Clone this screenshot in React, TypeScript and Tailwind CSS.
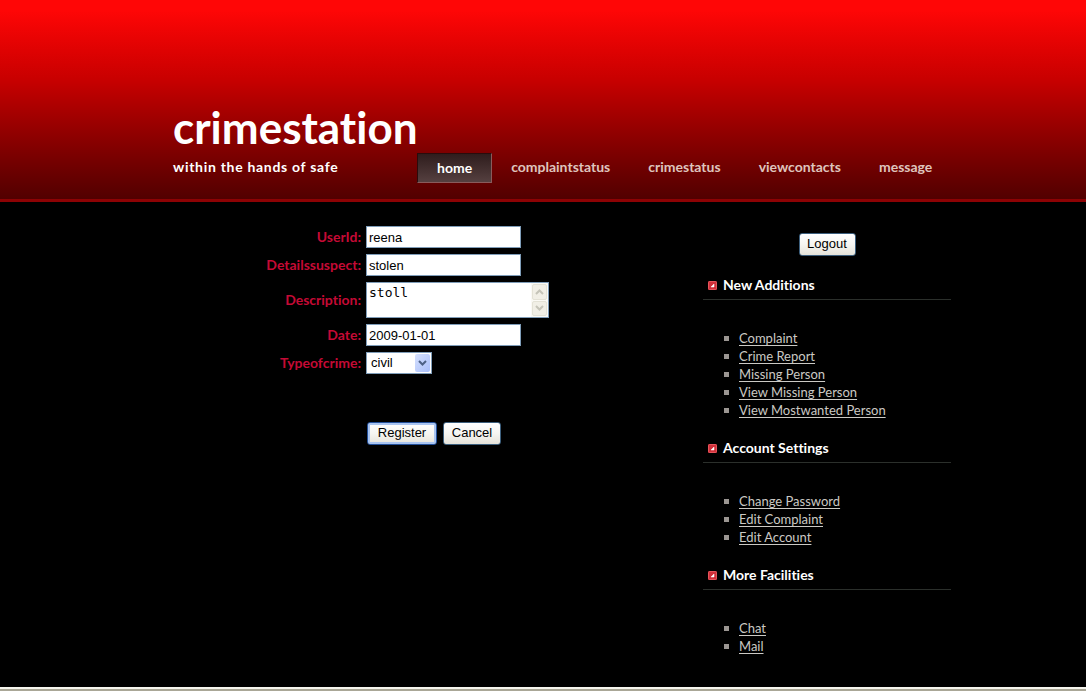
import React from 'react';

const navItems = ['complaintstatus', 'crimestatus', 'viewcontacts', 'message'];

const sections = [
  {
    title: 'New Additions',
    links: ['Complaint', 'Crime Report', 'Missing Person', 'View Missing Person', 'View Mostwanted Person'],
  },
  { title: 'Account Settings', links: ['Change Password', 'Edit Complaint', 'Edit Account'] },
  { title: 'More Facilities', links: ['Chat', 'Mail'] },
];

const fieldClass =
  'h-[22px] w-[155px] border border-[#7f9db9] bg-white px-[2px] text-[13px] leading-4 text-black outline-none';
const labelClass = "text-right font-['Lato',sans-serif] text-[14px] leading-4 font-bold text-[#c50a35]";
const buttonClass =
  'h-[23px] rounded-[3px] border bg-linear-to-b from-white via-[#f6f5f1] to-[#e6e3da] pb-[2px] text-[13px] leading-4 text-black';

function HeadingIcon() {
  return (
    <svg width="9" height="9" viewBox="0 0 9 9" aria-hidden="true">
      <rect width="9" height="9" rx="1.5" fill="#d0303a" />
      <rect x="0.5" y="0.5" width="8" height="8" rx="1" fill="none" stroke="#e5555c" />
      <path d="M6 3v3H3z" fill="#fff" stroke="#fff" strokeWidth="0.5" />
    </svg>
  );
}

function ScrollArrow({ up }: { up?: boolean }) {
  return (
    <span className="flex flex-1 items-center justify-center rounded-[2px] border border-[#e4e2d6] bg-[#f1efe6]">
      <svg width="9" height="6" viewBox="0 0 9 6" aria-hidden="true">
        <path d={up ? 'M1 5l3.5-3.5L8 5' : 'M1 1l3.5 3.5L8 1'} fill="none" stroke="#c5c4b8" strokeWidth="2" />
      </svg>
    </span>
  );
}

export default function App() {
  return (
    <div className="flex min-h-screen flex-col bg-black font-['Liberation_Sans',sans-serif] [font-variant-ligatures:none]">
      <header className="border-b-[3px] border-[#8d0204] bg-linear-to-b from-[#ff0606] from-5% via-[#c80000] via-40% to-[#520000] pt-[101px]">
        <div className="mx-auto flex h-[98px] max-w-[816px] pl-[38px] font-['Lato',sans-serif] font-bold">
          <div className="w-[244px] shrink-0 text-white">
            <h1 className="text-[44px] leading-[52px] font-bold">crimestation</h1>
            <p className="pt-[2px] text-[14px] leading-6 tracking-wider whitespace-nowrap">within the hands of safe</p>
          </div>
          <nav className="flex flex-1 items-start pt-[52px] text-[14px] leading-7">
            <a
              href="#home"
              className="border border-t-[#2a0c0c] border-r-[#8a5b5b] border-b-[#8a5b5b] border-l-[#2a0c0c] bg-linear-to-b from-[#2f1d1d] to-[#554040] px-[19px] text-white"
            >
              home
            </a>
            {navItems.map((item) => (
              <a key={item} href={`#${item}`} className="px-[19px] text-[#dfc4bd]">
                {item}
              </a>
            ))}
          </nav>
        </div>
      </header>

      <main className="mx-auto flex w-full max-w-[816px] flex-1 items-start">
        <form className="flex-1 pt-6" onSubmit={(e) => e.preventDefault()}>
          <div className="grid grid-cols-[226px_auto] items-center justify-start gap-x-[5px] gap-y-[6px]">
            <label htmlFor="user" className={labelClass}>UserId:</label>
            <input id="user" defaultValue="reena" className={fieldClass} />
            <label htmlFor="details" className={labelClass}>Detailssuspect:</label>
            <input id="details" defaultValue="stolen" className={fieldClass} />
            <label htmlFor="description" className={labelClass}>Description:</label>
            <div className="flex h-9 w-[183px] border border-[#7f9db9] bg-white">
              <textarea
                id="description"
                defaultValue="stoll"
                className="min-w-0 flex-1 resize-none overflow-hidden px-[2px] pt-[2px] font-['DejaVu_Sans_Mono',monospace] text-[13px] leading-4 text-black outline-none"
              />
              <div className="flex w-[17px] flex-col gap-px bg-[#fbfaf5] p-px">
                <ScrollArrow up />
                <ScrollArrow />
              </div>
            </div>
            <label htmlFor="date" className={labelClass}>Date:</label>
            <input id="date" defaultValue="2009-01-01" className={fieldClass} />
            <label htmlFor="type" className={labelClass}>Typeofcrime:</label>
            <div className="relative h-[22px] w-[66px]">
              <select
                id="type"
                className="block h-full w-full appearance-none border border-[#7f9db9] bg-white pl-1 text-[13px] leading-4 text-black outline-none"
              >
                <option>civil</option>
              </select>
              <span className="pointer-events-none absolute top-[2px] right-[2px] flex h-[18px] w-[15px] items-center justify-center rounded-[2px] bg-linear-to-br from-[#d5e0fd] to-[#aabffa]">
                <svg width="9" height="6" viewBox="0 0 9 6" aria-hidden="true">
                  <path d="M1 1l3.5 3.5L8 1" fill="none" stroke="#4d6185" strokeWidth="2" />
                </svg>
              </span>
            </div>
          </div>
          <div className="flex gap-[6px] pt-12 pl-[232px]">
            <button type="submit" className={`${buttonClass} w-[70px] border-[#23509a] inset-ring-2 inset-ring-[#a9c4f0]`}>
              Register
            </button>
            <button type="reset" className={`${buttonClass} w-[58px] border-[#3d5f7d]`}>Cancel</button>
          </div>
        </form>

        <aside className="w-[248px] shrink-0 pt-[31px] pb-6">
          <div className="flex justify-center pb-[19px]">
            <button type="button" className={`${buttonClass} w-[57px] border-[#3d5f7d]`}>Logout</button>
          </div>
          <div className="flex flex-col gap-[19px] font-['Lato',sans-serif]">
            {sections.map((section) => (
              <section key={section.title}>
                <h2 className="flex items-center gap-[6px] border-b border-[#2b2f2b] pb-1 pl-[5px] text-[14px] leading-5 font-bold text-white">
                  <HeadingIcon />
                  {section.title}
                </h2>
                <ul className="pt-[29px] pl-[21px]">
                  {section.links.map((link) => (
                    <li key={link} className="flex items-center gap-[10px] text-[13px] leading-[18px]">
                      <span className="size-[5px] bg-[#9b9692]" />
                      <a
                        href="#"
                        className="text-[#cbc9c4] underline decoration-1 underline-offset-2 [text-decoration-skip-ink:none]"
                      >
                        {link}
                      </a>
                    </li>
                  ))}
                </ul>
              </section>
            ))}
          </div>
        </aside>
      </main>

      <footer className="h-1 border-t-2 border-[#f6f5ee] bg-[#aaa797]" />
    </div>
  );
}
